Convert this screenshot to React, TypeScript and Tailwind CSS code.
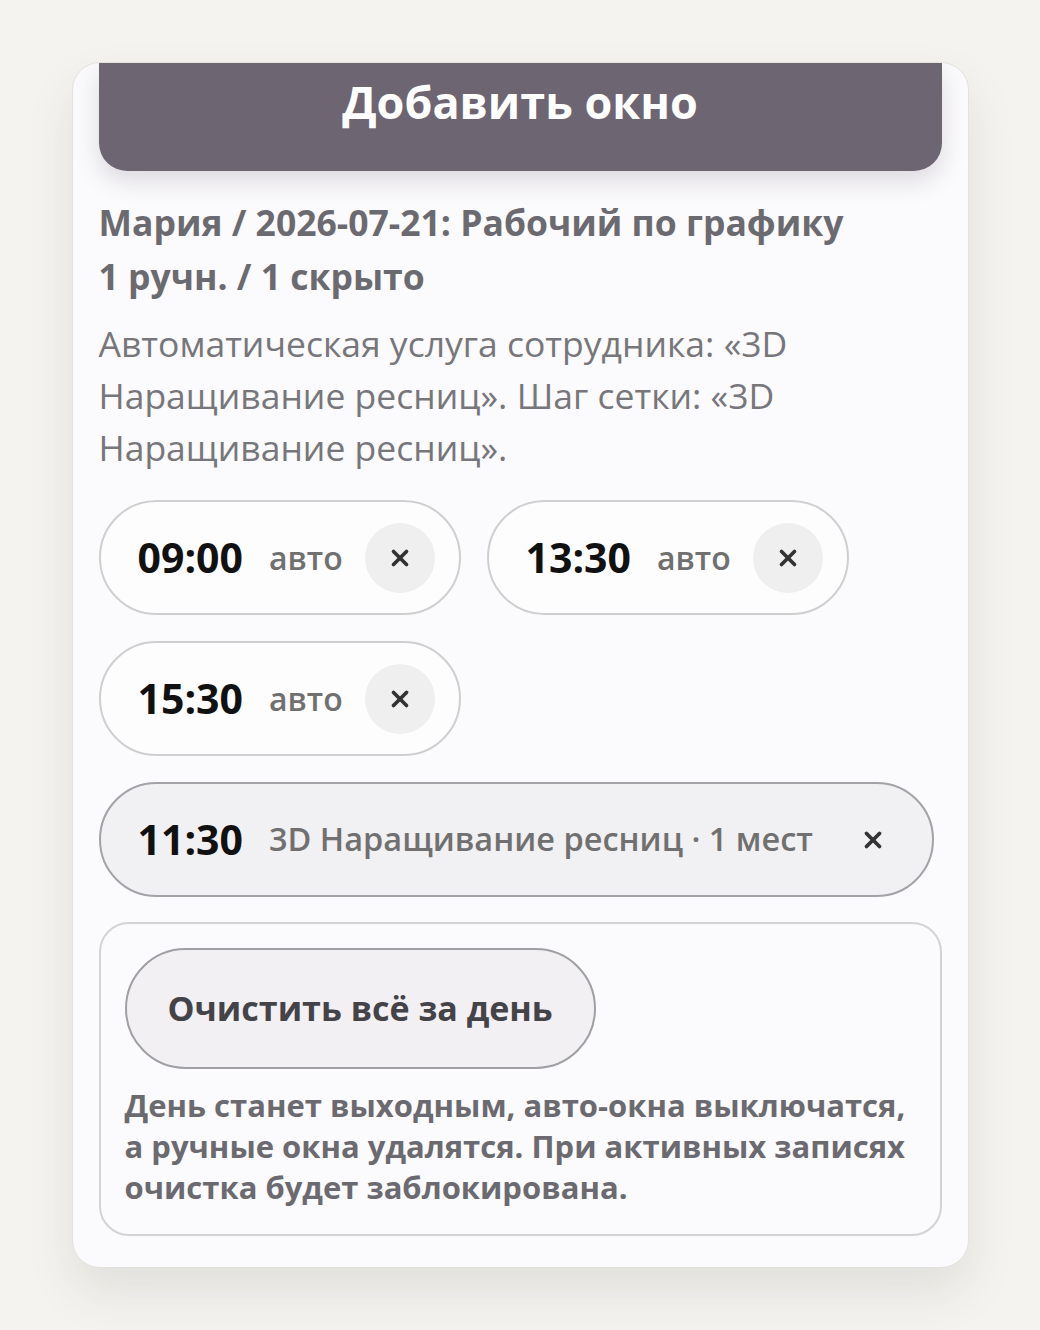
import { X } from 'lucide-react';

interface Slot {
  time: string;
  label: string;
}

const autoSlots: Slot[] = [
  { time: '09:00', label: 'авто' },
  { time: '13:30', label: 'авто' },
  { time: '15:30', label: 'авто' },
];

function AutoChip({ slot }: { slot: Slot }) {
  return (
    <div className="flex items-center h-[115px] w-[362px] pl-[37px] pr-[24px] rounded-full border-2 border-[#cfcfd1] bg-[#fdfdfd]">
      <span className="text-[41px] font-bold text-[#111] tabular-nums">{slot.time}</span>
      <span className="ml-[26px] text-[32px] font-semibold text-[#707070]">{slot.label}</span>
      <button className="ml-auto w-[70px] h-[70px] rounded-full bg-[#efefef] flex items-center justify-center text-[#333]">
        <X size={26} strokeWidth={3.4} />
      </button>
    </div>
  );
}

export default function App() {
  return (
    <div className="min-h-screen bg-[#f4f3ef] pt-[62px] pb-[62px]" style={{ fontFamily: '"Open Sans", "Liberation Sans", sans-serif' }}>
      <div className="mx-auto w-[897px] h-[1206px] rounded-[28px] bg-[#fbfafc] border border-[#e4e2de] shadow-[0_24px_48px_rgba(60,55,50,0.10)] overflow-hidden px-[26px]">
        {/* Add window */}
        <button className="w-full h-[108px] rounded-b-[28px] bg-[#6d6571] text-white text-[45px] font-bold flex items-center justify-center pb-[30px] shadow-[0_10px_24px_rgba(80,70,90,0.18)]">
          Добавить окно
        </button>

        {/* Summary */}
        <div className="mt-[24px] text-[35.5px] leading-[54px] font-bold text-[#6b6a70]">
          <div>Мария / 2026-07-21: Рабочий по графику</div>
          <div>1 ручн. / 1 скрыто</div>
        </div>

        <p className="mt-[14px] text-[35.5px] leading-[52px] text-[#77767b]">
          Автоматическая услуга сотрудника: «3D Наращивание ресниц». Шаг сетки: «3D Наращивание ресниц».
        </p>

        {/* Auto slots */}
        <div className="mt-[27px] flex flex-wrap gap-[26px] pr-[60px]">
          {autoSlots.map((s) => (
            <AutoChip key={s.time} slot={s} />
          ))}
        </div>

        {/* Manual slot */}
        <div className="mt-[26px] mr-[8px] flex items-center h-[115px] pl-[37px] pr-[46px] rounded-full border-2 border-[#a3a2a6] bg-[#f1f0f2]">
          <span className="text-[41px] font-bold text-[#111] tabular-nums">11:30</span>
          <span className="ml-[26px] text-[32.5px] font-semibold text-[#707070]">3D Наращивание ресниц · 1 мест</span>
          <button className="ml-auto text-[#333]">
            <X size={26} strokeWidth={3.4} />
          </button>
        </div>

        {/* Clear day */}
        <div className="mt-[25px] rounded-[30px] border-2 border-[#d3d2d5] pl-[24px] pr-[16px] pt-[24px] pb-[26px]">
          <button className="h-[121px] px-[41px] rounded-full border-2 border-[#a09fa3] bg-[#f2f0f2] text-[34px] font-bold text-[#444348]">
            Очистить всё за день
          </button>
          <p className="mt-[16px] text-[31px] leading-[41px] font-bold text-[#6b6a70]">
            День станет выходным, авто-окна выключатся, а ручные окна удалятся. При активных записях очистка будет заблокирована.
          </p>
        </div>
      </div>
    </div>
  );
}
